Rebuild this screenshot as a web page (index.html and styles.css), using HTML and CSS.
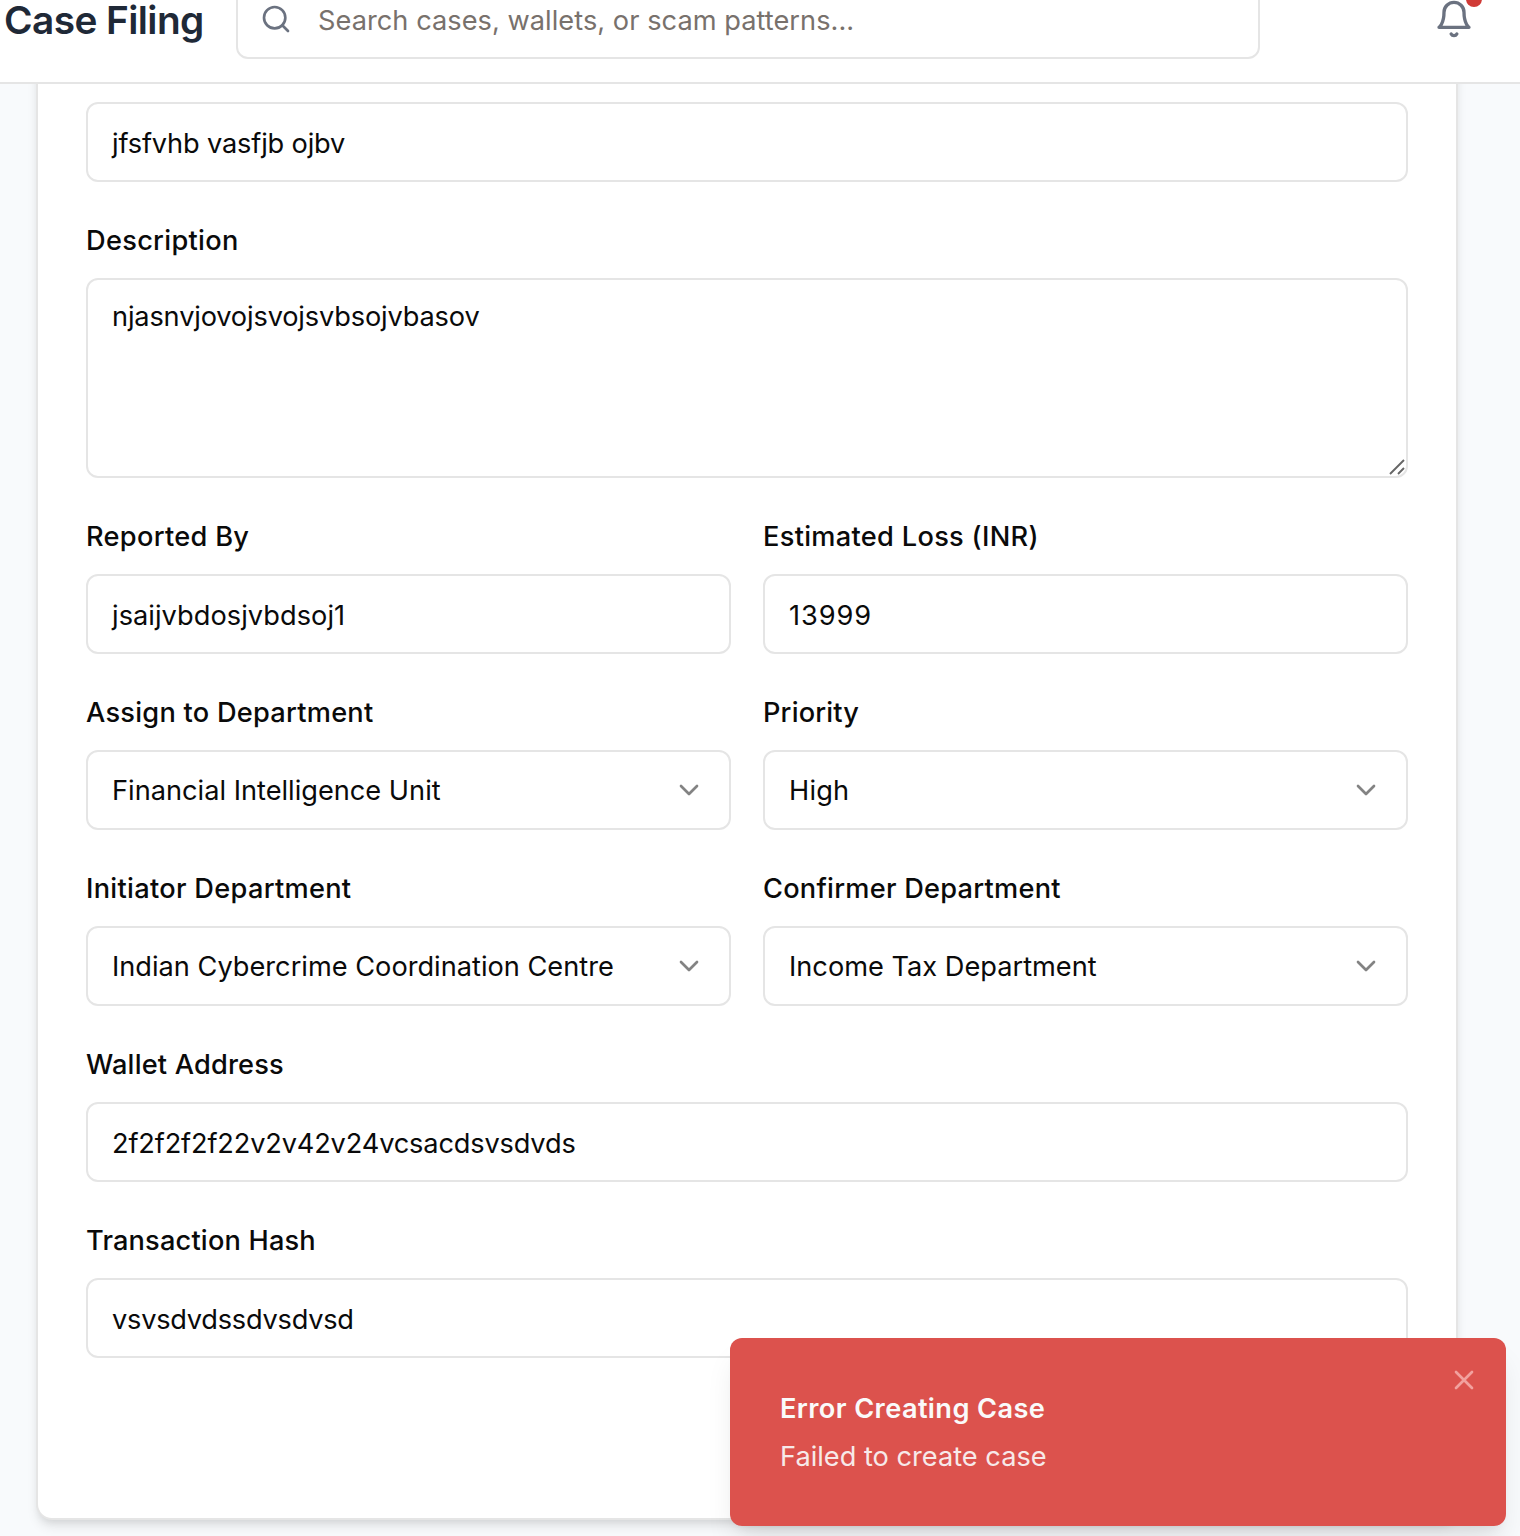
FILE: index.html
```html
<!DOCTYPE html>
<html lang="en">
<head>
<meta charset="utf-8">
<title>Case Filing</title>
<link rel="stylesheet" href="styles.css">
</head>
<body>
<header class="topbar">
  <h1 class="title">Case Filing</h1>
  <div class="search">
    <svg class="search-icon" viewBox="0 0 24 24"><circle cx="11" cy="11" r="8"/><path d="m21 21-4.3-4.3"/></svg>
    <span class="search-text">Search cases, wallets, or scam patterns...</span>
  </div>
  <div class="bell">
    <svg class="bell-icon" viewBox="0 0 24 24"><path d="M6 8a6 6 0 0 1 12 0c0 7 3 9 3 9H3s3-2 3-9"/><path d="M10.3 21a1.94 1.94 0 0 0 3.4 0"/></svg>
    <span class="bell-dot"></span>
  </div>
</header>

<main class="page">
  <form class="card">
    <div class="field">
      <div class="control"><span class="tight">jfsfvhb vasfjb ojbv</span></div>
    </div>
    <div class="field">
      <label class="label">Description</label>
      <div class="control area"><span class="tight">njasnvjovojsvojsvbsojvbasov</span>
        <svg class="grip" viewBox="0 0 16 16"><path d="M1 15 15 1M9 15l6-6"/></svg>
      </div>
    </div>
    <div class="row">
      <div class="field">
        <label class="label">Reported By</label>
        <div class="control"><span class="handle">jsaijvbdosjvbdsoj1</span></div>
      </div>
      <div class="field">
        <label class="label">Estimated Loss (INR)</label>
        <div class="control"><span class="amount">13999</span></div>
      </div>
    </div>
    <div class="row">
      <div class="field">
        <label class="label mid">Assign to Department</label>
        <div class="control select"><span>Financial Intelligence Unit</span><svg class="chevron" viewBox="0 0 24 24"><path d="m6 9 6 6 6-6"/></svg></div>
      </div>
      <div class="field">
        <label class="label snug">Priority</label>
        <div class="control select"><span class="short">High</span><svg class="chevron" viewBox="0 0 24 24"><path d="m6 9 6 6 6-6"/></svg></div>
      </div>
    </div>
    <div class="row">
      <div class="field">
        <label class="label">Initiator Department</label>
        <div class="control select"><span>Indian Cybercrime Coordination Centre</span><svg class="chevron" viewBox="0 0 24 24"><path d="m6 9 6 6 6-6"/></svg></div>
      </div>
      <div class="field">
        <label class="label mid">Confirmer Department</label>
        <div class="control select"><span>Income Tax Department</span><svg class="chevron" viewBox="0 0 24 24"><path d="m6 9 6 6 6-6"/></svg></div>
      </div>
    </div>
    <div class="field">
      <label class="label snug">Wallet Address</label>
      <div class="control"><span class="tight">2f2f2f2f22v2v42v24vcsacdsvsdvds</span></div>
    </div>
    <div class="field">
      <label class="label snug">Transaction Hash</label>
      <div class="control"><span class="tighter">vsvsdvdssdvsdvsd</span></div>
    </div>
  </form>
</main>

<div class="toast" role="alert">
  <div class="toast-title">Error Creating Case</div>
  <div class="toast-text">Failed to create case</div>
  <svg class="toast-close" viewBox="0 0 24 24"><path d="M18 6 6 18M6 6l12 12"/></svg>
</div>
</body>
</html>
```
FILE: styles.css
```css
* { box-sizing: border-box; }

body {
  margin: 0;
  height: 1536px;
  overflow: hidden;
  background: #f8fafc;
  color: #0a0a0a;
  font: 400 27.2px/40px Inter, "Liberation Sans", sans-serif;
  -webkit-font-smoothing: antialiased;
}

svg {
  fill: none;
  stroke: currentColor;
  stroke-width: 2;
  stroke-linecap: round;
  stroke-linejoin: round;
  flex: none;
}

.topbar {
  position: relative;
  z-index: 1;
  display: flex;
  align-items: flex-start;
  height: 84px;
  padding-left: 4px;
  padding-right: 46px;
  background: #fff;
  border-bottom: 2px solid #e5e5e5;
}

.title {
  width: 232px;
  margin: 0;
  font-size: 38.8px;
  line-height: 40px;
  font-weight: 600;
  letter-spacing: -0.58px;
  white-space: nowrap;
  color: #1f2937;
}

.search {
  display: flex;
  align-items: center;
  gap: 26px;
  width: 1024px;
  height: 80px;
  margin-top: -21px;
  padding-left: 22px;
  border: 2px solid #e5e5e5;
  border-radius: 12px;
  background: #fff;
}

.search-icon { width: 32px; height: 32px; color: #6b7280; }
.search-text { color: #78716c; letter-spacing: 0.04px; padding-top: 4px; }

.bell {
  position: relative;
  height: 40px;
  margin: -1px 0 0 auto;
  color: #6b7280;
}
.bell-icon { display: block; width: 40px; height: 40px; }
.bell-dot {
  position: absolute;
  top: -8px;
  right: -8px;
  width: 16px;
  height: 16px;
  border-radius: 50%;
  background: #d03a36;
}

.page { padding: 0 62px 0 36px; }

.card {
  display: flex;
  flex-direction: column;
  gap: 44px;
  height: 1476px;
  margin-top: -40px;
  padding: 56px 48px 0;
  border: 2px solid #e5e5e5;
  border-radius: 16px;
  background: #fff;
  box-shadow: 0 8px 12px -2px rgba(0, 0, 0, .1), 0 4px 8px -4px rgba(0, 0, 0, .1);
}

.row { display: grid; grid-template-columns: 1fr 1fr; gap: 32px; }
.field { display: flex; flex-direction: column; gap: 24px; min-width: 0; }

.label {
  height: 28px;
  line-height: 30px;
  font-weight: 500;
  letter-spacing: 0.3px;
}
.label.mid { letter-spacing: 0.25px; }
.label.snug { letter-spacing: 0.18px; }

.control {
  display: flex;
  align-items: center;
  height: 80px;
  padding: 4px 24px 0;
  border: 2px solid #e5e5e5;
  border-radius: 12px;
  background: #fff;
}
.control.area {
  position: relative;
  align-items: flex-start;
  height: 200px;
  padding-top: 17px;
}
.control.select { justify-content: space-between; padding-top: 0; }
.control.select span { padding-top: 2px; }

.tight { letter-spacing: -0.16px; }
.tighter { letter-spacing: -0.24px; }
.handle { letter-spacing: 0.05px; }
.short { letter-spacing: 0.2px; }
.amount { letter-spacing: 0.9px; }

.grip {
  position: absolute;
  right: 1px;
  bottom: 1px;
  width: 16px;
  height: 16px;
  stroke-width: 1.9;
  stroke-linecap: butt;
  color: #666;
}
.chevron { width: 32px; height: 32px; opacity: .5; }

.toast {
  position: absolute;
  z-index: 2;
  left: 730px;
  top: 1338px;
  width: 776px;
  height: 188px;
  padding: 51px 50px 49px;
  border-radius: 12px;
  background: #dc524d;
  color: #fafafa;
  box-shadow: 0 20px 30px -6px rgba(0, 0, 0, .1), 0 8px 12px -8px rgba(0, 0, 0, .1);
}
.toast-title { margin-bottom: 8px; font-weight: 600; letter-spacing: 0.38px; }
.toast-text { opacity: .9; }
.toast-close {
  position: absolute;
  top: 26px;
  right: 26px;
  width: 32px;
  height: 32px;
  color: #f2a19e;
}
```
